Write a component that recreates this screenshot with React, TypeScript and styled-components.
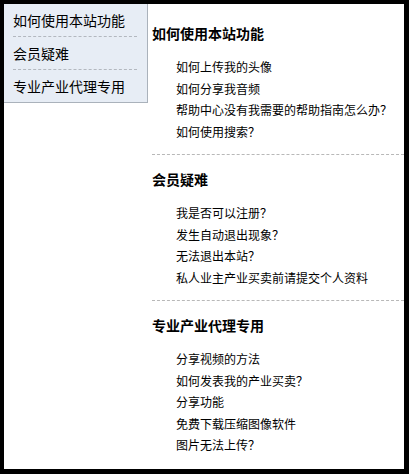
import React from "react";
import styled, { createGlobalStyle } from "styled-components";

const Global = createGlobalStyle`
  html, body { margin: 0; padding: 0; background: #000; }
  * { box-sizing: border-box; }
`;

const Frame = styled.div`
  width: 409px;
  height: 474px;
  background: #fff;
  border-style: solid;
  border-color: #000;
  border-width: 4px 5px 5px 4px;
  display: flex;
  align-items: flex-start;
  font-family: "Noto Sans CJK SC", "Noto Sans", sans-serif;
  color: #000;
  overflow: hidden;
`;

const SideMenu = styled.ul`
  list-style: none;
  margin: 0;
  padding: 0 10px 0 9px;
  width: 144px;
  flex: none;
  background: #e7edf5;
  border-right: 1px solid #aab2bb;
  border-bottom: 1px solid #aab2bb;
`;

const MenuItem = styled.li<{ $last?: boolean }>`
  font-size: 14px;
  line-height: 32px;
  height: ${(p) => (p.$last ? "32px" : "33px")};
  white-space: nowrap;
  border-bottom: ${(p) => (p.$last ? "none" : "1px dashed #b3b8bf")};
  padding-left: 0;
`;

const Content = styled.div`
  flex: 1;
  padding: 5px 0 0 4px;
`;

const Section = styled.section<{ $last?: boolean }>`
  padding-top: 14px;
  padding-bottom: 12px;
  border-bottom: ${(p) => (p.$last ? "none" : "1px dashed #b8b8b8")};
`;

const Heading = styled.h2`
  margin: 0 0 13px 0;
  font-size: 14px;
  line-height: 20px;
  font-weight: bold;
  white-space: nowrap;
`;

const LinkList = styled.ul`
  list-style: none;
  margin: 0;
  padding: 0 0 0 24px;
`;

const LinkItem = styled.li`
  font-size: 12px;
  line-height: 21.5px;
  white-space: nowrap;
`;

const sections = [
  {
    title: "如何使用本站功能",
    links: ["如何上传我的头像", "如何分享我音频", "帮助中心没有我需要的帮助指南怎么办？", "如何使用搜索？"],
  },
  {
    title: "会员疑难",
    links: ["我是否可以注册？", "发生自动退出现象？", "无法退出本站？", "私人业主产业买卖前请提交个人资料"],
  },
  {
    title: "专业产业代理专用",
    links: ["分享视频的方法", "如何发表我的产业买卖？", "分享功能", "免费下载压缩图像软件", "图片无法上传？"],
  },
];

export default function App() {
  return (
    <>
      <Global />
      <Frame>
        <SideMenu>
          {sections.map((s, i) => (
            <MenuItem key={s.title} $last={i === sections.length - 1}>
              {s.title}
            </MenuItem>
          ))}
        </SideMenu>
        <Content>
          {sections.map((s, i) => (
            <Section key={s.title} $last={i === sections.length - 1}>
              <Heading>{s.title}</Heading>
              <LinkList>
                {s.links.map((l) => (
                  <LinkItem key={l}>{l}</LinkItem>
                ))}
              </LinkList>
            </Section>
          ))}
        </Content>
      </Frame>
    </>
  );
}
